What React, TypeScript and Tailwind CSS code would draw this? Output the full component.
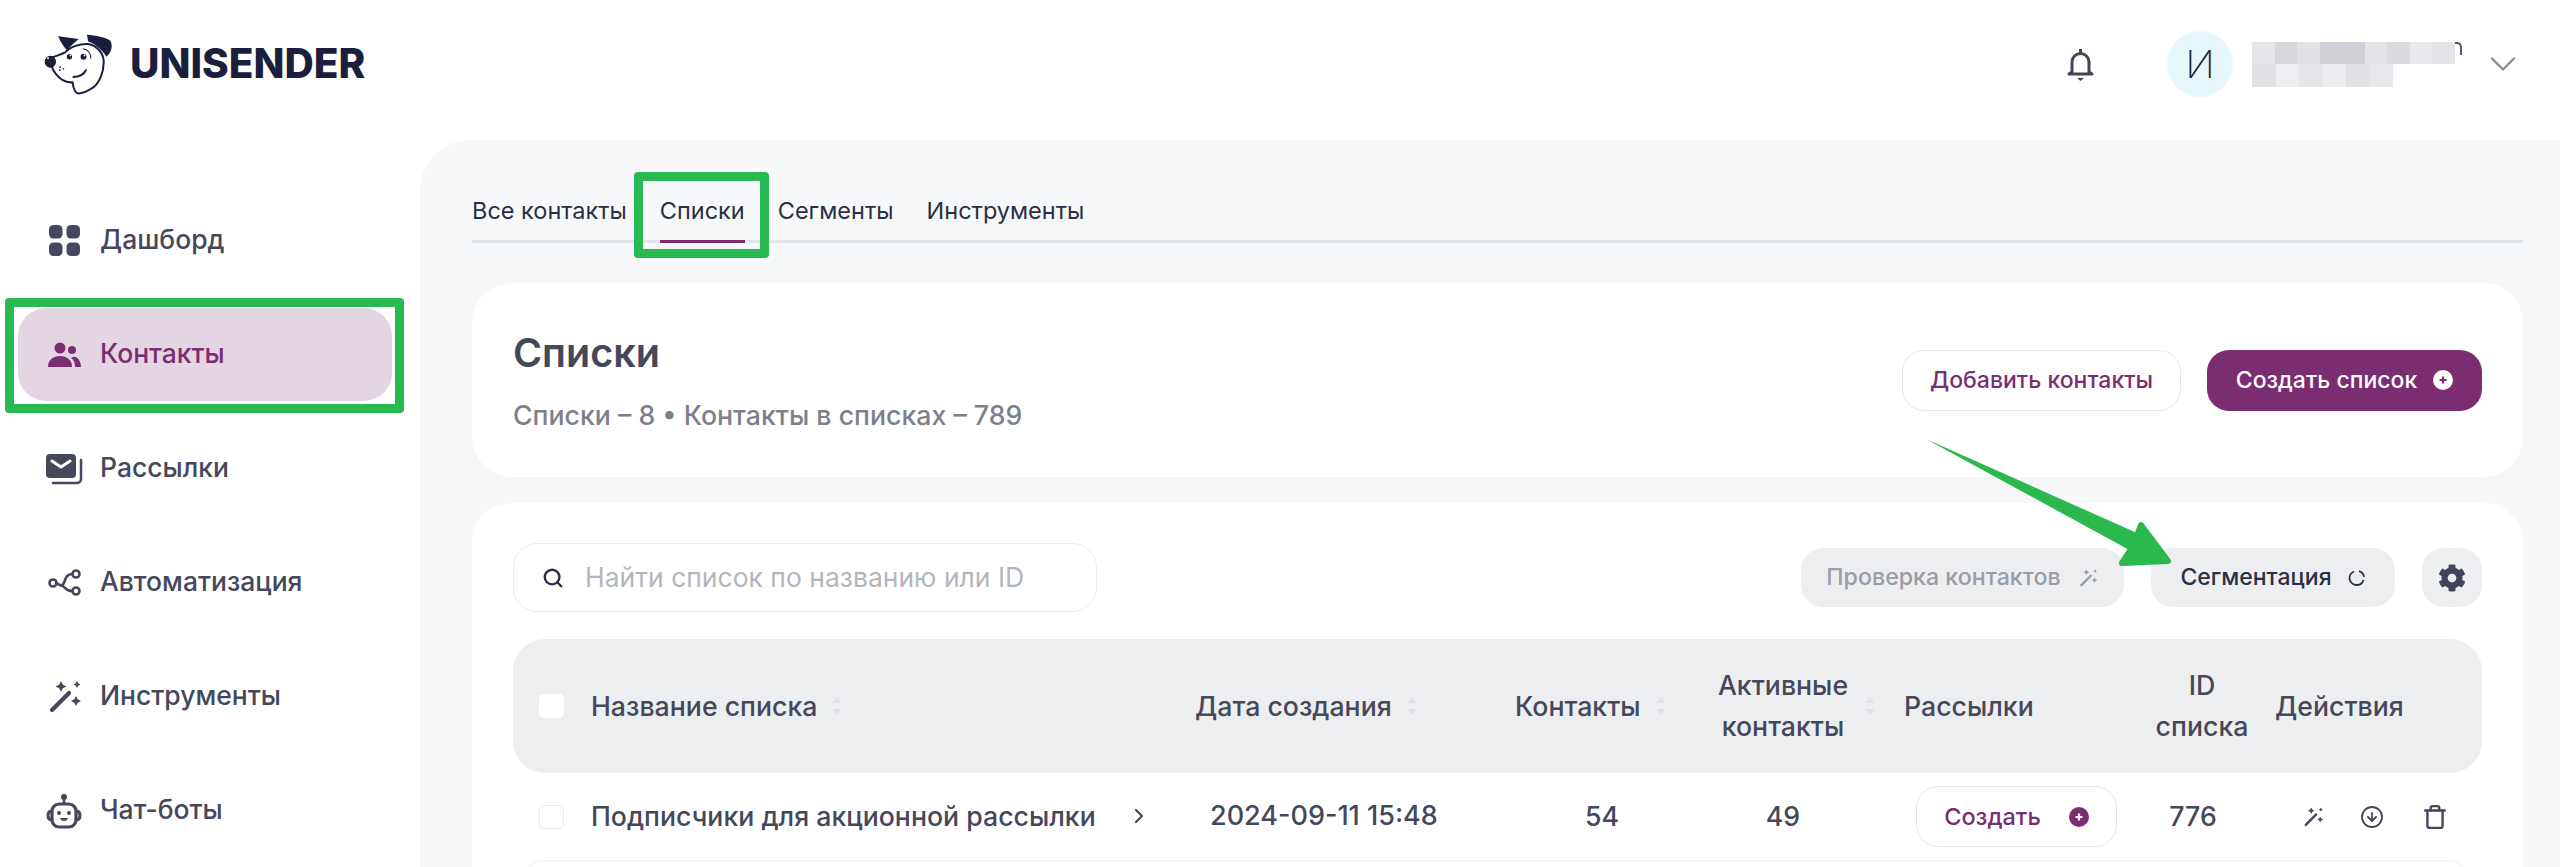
import React from 'react';
import { ChevronDown, ChevronRight, CircleArrowDown, Search, Trash } from 'lucide-react';
import { FaCog } from 'react-icons/fa';

const PURPLE = '#7b2d72';

/* логотип: мордочка собаки */
const DogLogo = () => (
  <svg viewBox="72 40 206 182" className="w-[69px] h-[61px] shrink-0">
    <path
      d="M88 112 C100 108 118 104 135 95 C150 78 180 68 205 70 C230 76 248 95 250 118 C252 150 238 190 212 204 C195 214 178 220 170 216 C160 210 160 195 157 184 C140 186 122 178 108 160 C100 150 92 140 88 112Z"
      fill="#fff"
      stroke="#1b1e3d"
      strokeWidth="6"
      strokeLinejoin="round"
    />
    <path d="M114 47 L176 55 C165 65 150 75 142 90 C130 78 120 62 114 47Z" fill="#1b1e3d" />
    <path d="M200 42 C225 44 258 50 270 60 C278 75 274 95 258 108 C250 92 228 70 204 62Z" fill="#1b1e3d" />
    <ellipse cx="91" cy="123" rx="17" ry="18" fill="#1b1e3d" />
    <circle cx="84" cy="112" r="3" fill="#fff" />
    <circle cx="148" cy="108" r="8" fill="#1b1e3d" />
    <circle cx="151" cy="104" r="2.5" fill="#fff" />
    <circle cx="190" cy="108" r="9" fill="#1b1e3d" />
    <circle cx="193" cy="104" r="3" fill="#fff" />
    <path d="M188 84 C202 86 212 96 212 114" fill="none" stroke="#1b1e3d" strokeWidth="3" />
    <path d="M160 168 C176 168 190 162 197 148" fill="none" stroke="#1b1e3d" strokeWidth="6" strokeLinecap="round" />
    <circle cx="120" cy="139" r="2.5" fill="#1b1e3d" />
    <circle cx="130" cy="144" r="2.5" fill="#1b1e3d" />
    <circle cx="119" cy="148" r="2.5" fill="#1b1e3d" />
  </svg>
);

const DashIcon = () => (
  <svg viewBox="0 0 40 40" className="w-10 h-10" fill="currentColor">
    <rect x="5" y="4" width="13.5" height="13.5" rx="4.5" />
    <rect x="22.500" y="4" width="13.5" height="13.5" rx="4.5" />
    <rect x="5" y="21.500" width="13.5" height="13.5" rx="4.5" />
    <rect x="22.500" y="21.500" width="13.5" height="13.5" rx="4.5" />
  </svg>
);

const PeopleIcon = () => (
  <svg viewBox="0 0 40 40" className="w-10 h-10" fill="currentColor">
    <circle cx="16" cy="13" r="5.5" />
    <circle cx="28" cy="15" r="4" />
    <path d="M4 32 C4 25 9 21 16 21 C23 21 28 25 28 32Z" />
    <path d="M29 22 C33 21 37 26 37 32 H31 C31 28 30 25 27 23Z" />
  </svg>
);

const MailIcon = () => (
  <svg viewBox="0 0 40 40" className="w-10 h-10">
    <rect x="2" y="5" width="30" height="24" rx="4" fill="currentColor" />
    <path d="M8 12 L17 18 L26 12" fill="none" stroke="#fff" strokeWidth="3" strokeLinecap="round" strokeLinejoin="round" />
    <path d="M37 11 V30 A4 4 0 0 1 33 34 H9" fill="none" stroke="currentColor" strokeWidth="2.5" strokeLinecap="round" />
  </svg>
);

const FlowIcon = () => (
  <svg viewBox="0 0 40 40" className="w-10 h-10" fill="none" stroke="currentColor" strokeWidth="2.6">
    <circle cx="9" cy="20" r="3.5" />
    <circle cx="32" cy="11" r="3.5" />
    <circle cx="32" cy="28" r="3.5" />
    <path d="M12.5 20.5 L17 22.5 C22 23 19 11 28.5 11" />
    <path d="M17 22.5 C22 23 20 28 28.5 28" />
  </svg>
);

const WandIcon = ({ className }: { className: string }) => (
  <svg viewBox="0 0 40 40" className={className} fill="currentColor">
    <path d="M8 33 L25 16" fill="none" stroke="currentColor" strokeWidth="4.2" strokeLinecap="round" />
    <path d="M17 4 L18.800 7.700 L22.500 9.500 L18.800 11.300 L17 15 L15.200 11.300 L11.500 9.500 L15.200 7.700Z" />
    <path d="M33 4 L34.200 6.300 L36.500 7.500 L34.200 8.700 L33 11 L31.800 8.700 L29.500 7.500 L31.800 6.300Z" />
    <path d="M32 19 L33.700 22.300 L37 24 L33.700 25.700 L32 29 L30.300 25.700 L27 24 L30.300 22.300Z" />
  </svg>
);

const BotIcon = () => (
  <svg viewBox="0 0 40 40" className="w-10 h-10">
    <circle cx="20" cy="6" r="3" fill="currentColor" />
    <path d="M20 8 V13" stroke="currentColor" strokeWidth="2.6" />
    <rect x="8" y="13" width="24" height="23" rx="7" fill="none" stroke="currentColor" strokeWidth="3.200" />
    <path d="M7 20 C3 21 3 28 7 29 M33 20 C37 21 37 28 33 29" fill="none" stroke="currentColor" strokeWidth="3" />
    <circle cx="15" cy="22" r="2" fill="currentColor" />
    <circle cx="25" cy="22" r="2" fill="currentColor" />
    <path d="M16 27 H24 C23 31 17 31 16 27Z" fill="currentColor" />
  </svg>
);

const BellIcon = () => (
  <svg viewBox="0 0 27 33" className="w-[27px] h-[33px]" fill="none" stroke="#42445a" strokeWidth="3">
    <path d="M5 24 V14 A8.500 8.500 0 0 1 22 14 V24 L25 26 H2Z" strokeLinejoin="round" />
    <path d="M13.500 1 V5" />
    <path d="M10 30 H17 L13.500 33Z" fill="#42445a" stroke="none" />
  </svg>
);

const PlusCircle = ({ bg, fg }: { bg: string; fg: string }) => (
  <svg viewBox="0 0 20 20" className="w-5 h-5 shrink-0">
    <circle cx="10" cy="10" r="10" fill={bg} />
    <path d="M10 6.500 V13.500 M6.500 10 H13.500" stroke={fg} strokeWidth="2.200" />
  </svg>
);

const SpinIcon = () => (
  <svg viewBox="0 0 18 18" className="w-[18px] h-[18px]" fill="none" stroke="#2b2e45" strokeWidth="1.800">
    <path d="M6 2.500 A7 7 0 0 0 9 16 A7 7 0 0 0 15.500 11" />
    <path d="M11 2.200 A7 7 0 0 1 16 8" />
  </svg>
);

const SortArrows = ({ className }: { className: string }) => (
  <svg viewBox="0 0 10 20" className={`w-[10px] h-5 shrink-0 ${className}`} fill="#dfe1e6">
    <path d="M5 1 L9.500 7 H0.500Z" />
    <path d="M5 19 L9.500 13 H0.500Z" />
  </svg>
);

const NAV = [
  { label: 'Дашборд', icon: <DashIcon /> },
  { label: 'Контакты', icon: <PeopleIcon />, active: true },
  { label: 'Рассылки', icon: <MailIcon /> },
  { label: 'Автоматизация', icon: <FlowIcon /> },
  { label: 'Инструменты', icon: <WandIcon className="w-10 h-10" /> },
  { label: 'Чат-боты', icon: <BotIcon /> },
];

const TABS = ['Все контакты', 'Списки', 'Сегменты', 'Инструменты'];

// размытые «пиксели» на месте почты пользователя
const BLUR_TOP = ['#e6e6ea', '#d6d6db', '#e2e2e6', '#d0d0d6', '#d0d0d6', '#e4e4e8', '#dcdce0', '#e8e8ec', '#e4e4e8'];
const BLUR_BOTTOM = ['#e2e2e6', '#eeeef1', '#e6e6ea', '#ecedf0', '#e2e2e6', '#e8e8ec'];

const COLS = 'grid grid-cols-[78px_604px_320px_200px_189px_248px_100px_1fr] items-center';

export default function App() {
  return (
    <div
      className="relative h-[867px] overflow-hidden bg-white flex flex-col text-[#45475a]"
      style={{ fontFamily: 'Inter, "Noto Sans", sans-serif' }}
    >
      {/* шапка */}
      <header className="h-[140px] shrink-0 flex items-center pb-3 pl-[44px] pr-[35px]">
        <DogLogo />
        <span className="ml-[17px] text-[40.5px] font-extrabold leading-none text-[#1b1e3d]">UNISENDER</span>
        <div className="ml-auto flex items-center">
          <BellIcon />
          <div className="ml-[73px] w-[66px] h-[66px] rounded-full bg-[#e6f8fd] flex items-center justify-center text-[38px] font-extralight text-[#1b1e3d]">
            И
          </div>
          <div className="ml-[19px] w-[210px] flex flex-col">
            <div className="flex items-start">
              {BLUR_TOP.map((c, i) => (
                <div key={i} className="w-[22.5px] h-[22px]" style={{ background: c }} />
              ))}
              <div className="w-[7px] h-[13px] border-t-2 border-r-2 border-[#55576a] rounded-tr-[5px]" />
            </div>
            <div className="flex">
              {BLUR_BOTTOM.map((c, i) => (
                <div key={i} className="w-[23.5px] h-[23px]" style={{ background: c }} />
              ))}
            </div>
          </div>
          <ChevronDown className="ml-[19px] w-[44px] h-[44px] text-[#8a8c98]" strokeWidth={1.3} />
        </div>
      </header>

      <div className="flex flex-1 min-h-0">
        {/* меню */}
        <nav className="w-[420px] shrink-0 pt-[54px] pl-[18px] pr-[28px] flex flex-col gap-[21px]">
          {NAV.map((item) => (
            <div
              key={item.label}
              className={`relative h-[93px] shrink-0 rounded-[28px] pl-[26px] flex items-center gap-[16px] text-[26.5px] font-medium ${
                item.active ? 'bg-[#e4d5e3] text-[#7b2d72]' : 'text-[#45475a]'
              }`}
            >
              {item.icon}
              <span className="pb-[1px]">{item.label}</span>
              {item.active && (
                <div className="absolute -left-[13px] -right-[12px] -top-[10px] -bottom-[12px] border-[9px] border-[#28b950] rounded-[4px]" />
              )}
            </div>
          ))}
        </nav>

        {/* контент */}
        <main className="flex-1 min-w-0 bg-[#f7f8fa] rounded-tl-[50px] pt-[43px] pl-[52px] pr-[37px] overflow-hidden">
          <div className="flex h-[60px] gap-[33px] border-b-[3px] border-[#e3e5ec] text-[23.5px] text-[#2b2e45]">
            {TABS.map((t) => (
              <div key={t} className="relative h-[57px] pb-[1px] flex items-center whitespace-nowrap">
                {t}
                {t === 'Списки' && (
                  <>
                    <div className="absolute left-0 right-0 -bottom-[3px] h-[3px] bg-[#7b2d72]" />
                    <div className="absolute -left-[26px] -right-[24px] -top-[11px] -bottom-[18px] border-[9px] border-[#28b950] rounded-[4px]" />
                  </>
                )}
              </div>
            ))}
          </div>

          <section className="mt-[40px] h-[194px] bg-white rounded-[40px] px-[41px] flex items-center justify-between shadow-[0_4px_20px_rgba(0,0,0,0.02)]">
            <div className="mt-[4px]">
              <h1 className="text-[39.5px] leading-[44px] font-semibold text-[#45475a]">Списки</h1>
              <p className="mt-[22px] text-[26.7px] leading-[36px] font-medium text-[#7d7f8c]">
                Списки – 8 • Контакты в списках – 789
              </p>
            </div>
            <div className="flex gap-[26px]">
              <button className="w-[279px] h-[61px] rounded-[22px] border border-[#e6e7eb] bg-white text-[23px] font-medium text-[#7b2d72]">
                Добавить контакты
              </button>
              <button className="w-[275px] h-[61px] rounded-[22px] bg-[#7b2d72] text-white text-[23px] font-medium flex items-center justify-center gap-[16px]">
                Создать список
                <PlusCircle bg="#fff" fg={PURPLE} />
              </button>
            </div>
          </section>

          <section className="mt-[26px] h-[400px] bg-white rounded-t-[40px] pt-[40px] px-[41px]">
            <div className="h-[69px] flex items-center justify-between">
              <div className="w-[584px] h-[69px] rounded-[24px] border border-[#eceded] flex items-center pl-[28px] gap-[21px]">
                <Search className="w-[22px] h-[22px] text-[#2b2e45]" strokeWidth={2.6} />
                <span className="text-[26.5px] text-[#b3b6bd]">Найти список по названию или ID</span>
              </div>
              <div className="flex items-center gap-[27px]">
                <button className="w-[323px] h-[59px] rounded-[22px] bg-[#edeef0] text-[23.2px] font-medium text-[#9a9ca6] flex items-center justify-center gap-[16px]">
                  Проверка контактов
                  <WandIcon className="w-[22px] h-[22px]" />
                </button>
                <button className="w-[244px] h-[59px] rounded-[22px] bg-[#edeef0] text-[23px] font-medium text-[#2b2e45] flex items-center justify-center gap-[16px]">
                  Сегментация
                  <SpinIcon />
                </button>
                <button className="w-[60px] h-[59px] rounded-[22px] bg-[#edeef0] flex items-center justify-center">
                  <FaCog className="w-[28px] h-[28px] text-[#42445a]" />
                </button>
              </div>
            </div>

            {/* таблица */}
            <div className={`${COLS} mt-[27px] h-[134px] bg-[#edeef0] rounded-[32px] text-[26.7px] leading-[41px] font-medium`}>
              <div className="pl-[26px]">
                <div className="w-[25px] h-[24px] rounded-[5px] bg-white" />
              </div>
              <div className="flex items-center">
                Название списка
                <SortArrows className="ml-[15px]" />
              </div>
              <div className="flex items-center">
                Дата создания
                <SortArrows className="ml-[15px]" />
              </div>
              <div className="flex items-center">
                Контакты
                <SortArrows className="ml-[15px]" />
              </div>
              <div className="flex items-center">
                <span className="w-[136px] text-center">Активные контакты</span>
                <SortArrows className="ml-[14px]" />
              </div>
              <div>Рассылки</div>
              <div className="text-center">
                ID
                <br />
                списка
              </div>
              <div className="pl-[23px]">Действия</div>
            </div>

            <div className={`${COLS} h-[87px] text-[26.7px] font-medium`}>
              <div className="pl-[26px]">
                <div className="w-[25px] h-[24px] rounded-[5px] border border-[#e9eaec] bg-white" />
              </div>
              <div className="flex items-center whitespace-nowrap">
                <span>Подписчики для акционной рассылки</span>
                <ChevronRight className="ml-[31px] w-[24px] h-[24px] text-[#45475a]" strokeWidth={2.2} />
              </div>
              <div className="pl-[15px] text-[27px]">2024-09-11 15:48</div>
              <div className="w-[174px] text-center">54</div>
              <div className="w-[136px] text-center">49</div>
              <div className="pl-[12px]">
                <button className="w-[201px] h-[61px] rounded-[22px] border border-[#e6e7eb] text-[23.5px] font-medium text-[#7b2d72] flex items-center justify-center gap-[28px]">
                  Создать
                  <PlusCircle bg={PURPLE} fg="#fff" />
                </button>
              </div>
              <div className="pr-[18px] text-center">776</div>
              <div className="pl-[49px] flex items-center text-[#45475a]">
                <WandIcon className="w-[24px] h-[24px]" />
                <CircleArrowDown className="ml-[35px] w-[24px] h-[24px]" strokeWidth={1.8} />
                <Trash className="ml-[38px] w-[26px] h-[26px]" strokeWidth={2.2} />
              </div>
            </div>

            <div className="ml-[9px] mr-[12px] h-[30px] rounded-t-[22px] border border-b-0 border-[#eeeff1]" />
          </section>
        </main>
      </div>

      {/* зелёная стрелка-аннотация */}
      <svg viewBox="1920 435 260 135" className="absolute left-[1920px] top-[435px] w-[260px] h-[135px]">
        <path d="M1926 439 L2137 533 L2133 552Z" fill="#2bb84c" />
        <path
          d="M2141 525 L2168 561 L2122 563 L2133 546Z"
          fill="#2bb84c"
          stroke="#2bb84c"
          strokeWidth="6"
          strokeLinejoin="round"
        />
      </svg>
    </div>
  );
}
